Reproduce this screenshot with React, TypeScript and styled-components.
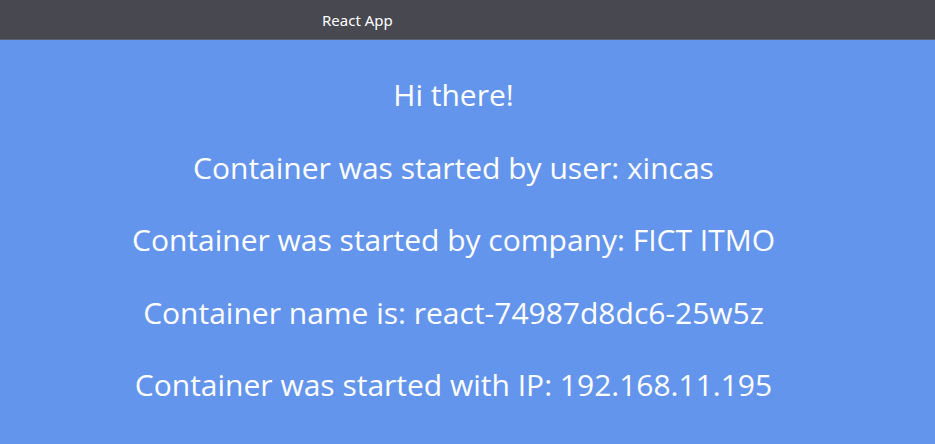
import React from "react";
import styled, { createGlobalStyle } from "styled-components";

const GlobalStyle = createGlobalStyle`
  html, body {
    margin: 0;
    padding: 0;
    background-color: #6495ed;
  }
`;

const TitleBar = styled.div`
  height: 39px;
  background-color: #484851;
  display: flex;
  align-items: center;
  padding-left: 322px;
  color: #ffffff;
  font-family: "Noto Sans", sans-serif;
  font-size: 15px;
  border-bottom: 1px solid #5a5f70;
`;

const Page = styled.main`
  background-color: #6495ed;
  min-height: 404px;
  display: flex;
  flex-direction: column;
  align-items: center;
  gap: 32.5px;
  padding: 35px 28px 0 0;
  box-sizing: border-box;
`;

const Line = styled.p`
  margin: 0;
  color: #ffffff;
  font-family: "Open Sans", sans-serif;
  font-size: 30px;
  line-height: 40px;
`;

const lines = [
  "Hi there!",
  "Container was started by user: xincas",
  "Container was started by company: FICT ITMO",
  "Container name is: react-74987d8dc6-25w5z",
  "Container was started with IP: 192.168.11.195",
];

export default function App() : JSX.Element
{
  return (
    <>
      <GlobalStyle />
      <TitleBar>React App</TitleBar>
      <Page>
        {lines.map(text => <Line key={text}>{text}</Line>)}
      </Page>
    </>
  );
}
